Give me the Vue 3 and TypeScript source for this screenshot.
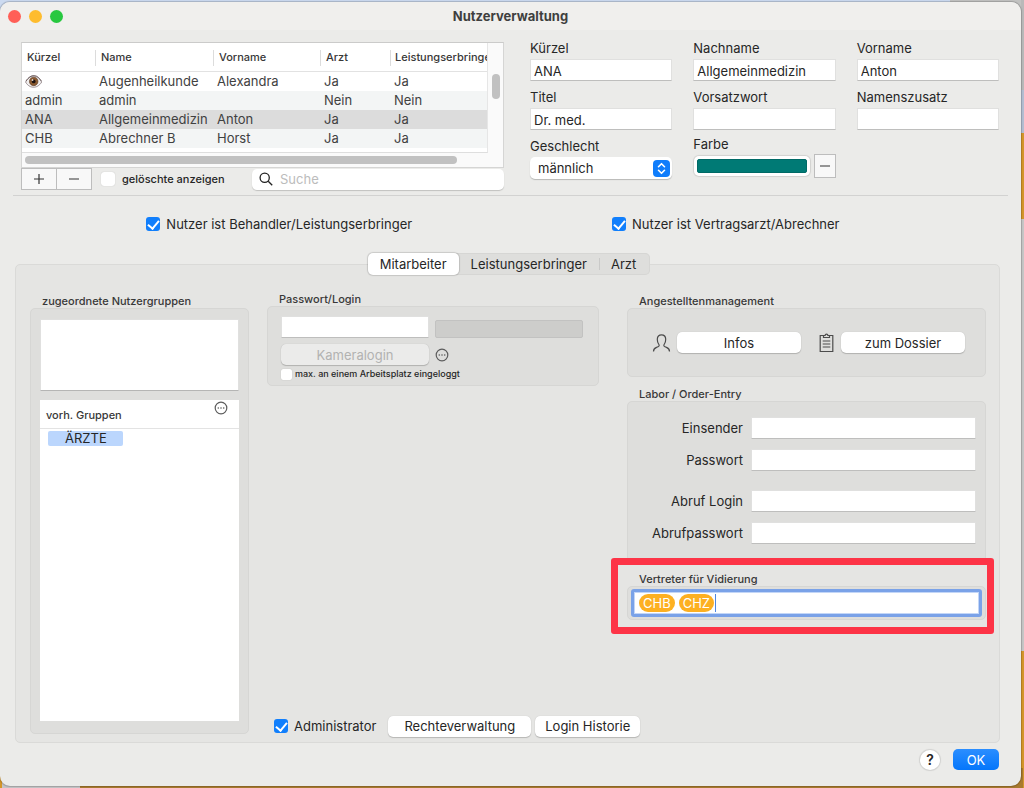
<script setup lang="ts">
import { ref } from 'vue'

interface UserRow {
  code: string
  name: string
  first: string
  doctor: string
  provider: string
}

const columns = ['Kürzel', 'Name', 'Vorname', 'Arzt', 'Leistungserbringer']
const users: UserRow[] = [
  { code: '', name: 'Augenheilkunde', first: 'Alexandra', doctor: 'Ja', provider: 'Ja' },
  { code: 'admin', name: 'admin', first: '', doctor: 'Nein', provider: 'Nein' },
  { code: 'ANA', name: 'Allgemeinmedizin', first: 'Anton', doctor: 'Ja', provider: 'Ja' },
  { code: 'CHB', name: 'Abrechner B', first: 'Horst', doctor: 'Ja', provider: 'Ja' },
]
const selected = ref(2)

const fields = ref([
  { id: 'kuerzel', label: 'Kürzel', value: 'ANA' },
  { id: 'nachname', label: 'Nachname', value: 'Allgemeinmedizin' },
  { id: 'vorname', label: 'Vorname', value: 'Anton' },
  { id: 'titel', label: 'Titel', value: 'Dr. med.' },
  { id: 'vorsatz', label: 'Vorsatzwort', value: '' },
  { id: 'zusatz', label: 'Namenszusatz', value: '' },
])
const gender = ref('männlich')
const color = ref('#007a75')

const showDeleted = ref(false)
const isProvider = ref(true)
const isContract = ref(true)
const isAdmin = ref(true)
const singleLogin = ref(false)

const tabs = ['Mitarbeiter', 'Leistungserbringer', 'Arzt']
const activeTab = ref(0)

const lab = ref([
  { id: 'einsender', label: 'Einsender', value: '' },
  { id: 'passwort', label: 'Passwort', value: '' },
  { id: 'abruflogin', label: 'Abruf Login', value: '' },
  { id: 'abrufpasswort', label: 'Abrufpasswort', value: '' },
])
const deputies = ['CHB', 'CHZ']
</script>

<template>
  <div class="desktop">
    <main class="window">
      <header class="titlebar">
        <div class="lights">
          <button class="light red" type="button" aria-label="Schließen"></button>
          <button class="light yellow" type="button" aria-label="Minimieren"></button>
          <button class="light green" type="button" aria-label="Vergrößern"></button>
        </div>
        <h1>Nutzerverwaltung</h1>
      </header>

      <section class="top">
        <div class="users">
          <div class="list">
            <div class="clip">
              <table>
                <colgroup>
                  <col class="c1" /><col class="c2" /><col class="c3" /><col class="c4" /><col class="c5" />
                </colgroup>
                <thead>
                  <tr><th v-for="c in columns" :key="c">{{ c }}</th></tr>
                </thead>
                <tbody>
                  <tr v-for="(u, i) in users" :key="u.name" :class="{ sel: i === selected }" @click="selected = i">
                    <td>
                      <svg v-if="!u.code" class="eye" viewBox="0 0 16 14" role="img" aria-label="Auge">
                        <path d="M0.5 7.5C3 3 6 2 8.2 2S13.5 3.4 15.7 7.5C13.3 11.3 10.6 12.4 8 12.4S2.700 11.200 0.500 7.500Z" fill="#f1efef" stroke="#8a7c7e" stroke-width=".8" />
                        <circle cx="8.200" cy="6.900" r="4" fill="#8a5a30" stroke="#5b3a24" stroke-width=".6" />
                        <circle cx="8.200" cy="6.900" r="1.800" fill="#1c1210" />
                        <circle cx="7.100" cy="5.600" r=".8" fill="#fff" />
                        <path d="M1 6.500C3.500 2.800 6 1.400 8.200 1.400S13 2.600 15.300 6.500" fill="none" stroke="#6b5a5b" stroke-width=".9" />
                      </svg>
                      <template v-else>{{ u.code }}</template>
                    </td>
                    <td>{{ u.name }}</td>
                    <td>{{ u.first }}</td>
                    <td>{{ u.doctor }}</td>
                    <td>{{ u.provider }}</td>
                  </tr>
                </tbody>
              </table>
            </div>
            <div class="vbar"><i></i></div>
            <div class="hbar"><i></i></div>
          </div>
          <div class="tools">
            <div class="pair">
              <button type="button" class="square" aria-label="Hinzufügen">
                <svg viewBox="0 0 12 12"><path d="M6 1v10M1 6h10" /></svg>
              </button>
              <button type="button" class="square" aria-label="Entfernen">
                <svg viewBox="0 0 12 12"><path d="M1 6h10" /></svg>
              </button>
            </div>
            <label class="check small"><input v-model="showDeleted" type="checkbox" />gelöschte anzeigen</label>
            <div class="search">
              <svg viewBox="0 0 14 14"><circle cx="5.700" cy="5.700" r="4.600" /><path d="M9.200 9.200l4 4" /></svg>
              <input type="search" placeholder="Suche" aria-label="Suche" />
            </div>
          </div>
        </div>

        <form class="form" @submit.prevent>
          <div v-for="f in fields" :key="f.id" class="field">
            <label :for="f.id">{{ f.label }}</label>
            <input :id="f.id" v-model="f.value" class="text" type="text" />
          </div>
          <div class="field">
            <label for="gender">Geschlecht</label>
            <div class="select">
              <select id="gender" v-model="gender">
                <option>männlich</option>
                <option>weiblich</option>
              </select>
              <svg viewBox="0 0 17 17"><rect width="17" height="17" rx="4" /><path d="M5.500 6.700l3-3 3 3M5.500 10.300l3 3 3-3" /></svg>
            </div>
          </div>
          <div class="field colour">
            <label for="colour">Farbe</label>
            <div class="well">
              <input id="colour" v-model="color" type="color" />
              <button type="button" class="square" aria-label="Farbe entfernen">
                <svg viewBox="0 0 12 12"><path d="M1 6h10" /></svg>
              </button>
            </div>
          </div>
        </form>
      </section>

      <hr />

      <section class="roles">
        <label class="check"><input v-model="isProvider" type="checkbox" />Nutzer ist Behandler/Leistungserbringer</label>
        <label class="check"><input v-model="isContract" type="checkbox" />Nutzer ist Vertragsarzt/Abrechner</label>
      </section>

      <nav class="tabs" role="tablist">
        <button
          v-for="(t, i) in tabs" :key="t" type="button" role="tab"
          :aria-selected="i === activeTab" :class="{ on: i === activeTab }" @click="activeTab = i"
        >{{ t }}</button>
      </nav>

      <section class="panel">
        <div class="group groups">
          <label class="cap" for="assigned">zugeordnete Nutzergruppen</label>
          <div class="box">
            <textarea id="assigned"></textarea>
            <div class="available">
              <div class="avhead">
                <span>vorh. Gruppen</span>
                <button type="button" class="more" aria-label="Mehr">
                  <svg viewBox="0 0 14 14"><circle class="ring" cx="7" cy="7" r="5.800" /><circle cx="4.300" cy="7" r=".8" /><circle cx="7" cy="7" r=".8" /><circle cx="9.700" cy="7" r=".8" /></svg>
                </button>
              </div>
              <ul><li>ÄRZTE</li></ul>
            </div>
          </div>
        </div>

        <div class="group login">
          <label class="cap" for="pw">Passwort/Login</label>
          <div class="box">
            <input id="pw" class="text" type="password" />
            <input class="strength" type="text" disabled aria-label="Passwortstärke" />
            <button type="button" class="push" disabled>Kameralogin</button>
            <button type="button" class="more" aria-label="Mehr">
              <svg viewBox="0 0 14 14"><circle class="ring" cx="7" cy="7" r="5.800" /><circle cx="4.300" cy="7" r=".8" /><circle cx="7" cy="7" r=".8" /><circle cx="9.700" cy="7" r=".8" /></svg>
            </button>
            <label class="check mini"><input v-model="singleLogin" type="checkbox" />max. an einem Arbeitsplatz eingeloggt</label>
          </div>
        </div>

        <div class="right">
          <div class="group">
            <div class="cap">Angestelltenmanagement</div>
            <div class="box staff">
              <svg class="person" viewBox="0 0 19 20"><path d="M1.500 18.500C1.500 14.800 3.500 15 6 13.800 7.600 13 7.300 12 6.600 11 5.500 9.400 5.300 7.600 5.300 6.200 5.300 3.500 7 1.800 9.500 1.800s4.200 1.700 4.200 4.400c0 1.400-.2 3.200-1.300 4.800-.7 1-1 2 .6 2.800 2.500 1.200 4.500 1 4.500 4.700" /></svg>
              <button type="button" class="push">Infos</button>
              <svg class="clipboard" viewBox="0 0 15 20"><path d="M4 2.500H1.200v16h12.600v-16H11M4.500 2.500h1.600a1.400 1.400 0 0 1 2.800 0h1.600v2h-6zM3.700 8h7.600M3.700 11h7.600M3.700 14h7.600" /></svg>
              <button type="button" class="push">zum Dossier</button>
            </div>
          </div>
          <div class="group">
            <div class="cap">Labor / Order-Entry</div>
            <div class="box lab">
              <div v-for="l in lab" :key="l.id" class="row">
                <label :for="l.id">{{ l.label }}</label>
                <input :id="l.id" v-model="l.value" class="text" type="text" />
              </div>
            </div>
          </div>
          <div class="group deputy">
            <label class="cap" for="deputy">Vertreter für Vidierung</label>
            <div class="box">
              <div class="tokens">
                <span v-for="d in deputies" :key="d" class="token">{{ d }}</span>
                <input id="deputy" type="text" />
              </div>
            </div>
            <div class="marker"></div>
          </div>
        </div>

        <div class="actions">
          <label class="check"><input v-model="isAdmin" type="checkbox" />Administrator</label>
          <button type="button" class="push rights">Rechteverwaltung</button>
          <button type="button" class="push">Login Historie</button>
        </div>
      </section>

      <footer>
        <button type="button" class="help" aria-label="Hilfe">?</button>
        <button type="button" class="ok">OK</button>
      </footer>
    </main>
  </div>
</template>

<style>
body {
  margin: 0;
}
</style>

<style scoped>
* {
  box-sizing: border-box;
}
.desktop {
  min-height: 100vh;
  padding: 2px 3px 2px 0;
  background:
    linear-gradient(90deg, #c4c4c6 78px, #a87a2e 78px) bottom / calc(100% - 3px) 20px no-repeat,
    linear-gradient(90deg, #ccdaf0 950px, #c2c2c1 950px) top left / calc(100% - 3px) 20px no-repeat,
    linear-gradient(#b9b9b9 90px, #b3bed2 90px 133px, #d4962a 133px 219px, #c6c6c6 219px 651px, #d4962a 651px);
  font-family: Inter, "Liberation Sans", sans-serif;
  font-size: 13px;
  line-height: 16px;
  color: #262626;
}
button,
input,
select,
textarea {
  margin: 0;
  padding: 0;
  border: 0;
  outline: 0;
  font: inherit;
  color: inherit;
  min-width: 0;
}
.window {
  display: flex;
  flex-direction: column;
  min-height: calc(100vh - 4px);
  border-radius: 10px;
  background: #ebebe9;
  box-shadow: 0 0 1px 1px #00000030;
  overflow: hidden;
}
.titlebar {
  display: grid;
  grid-template-columns: 1fr auto 1fr;
  align-items: center;
  height: 28px;
  background: #f0efed;
}
.titlebar h1 {
  margin: 0;
  font-size: 13px;
  font-weight: 700;
  color: #3f3f3f;
}
.lights {
  display: flex;
  gap: 8px;
  padding-left: 8px;
}
.light {
  width: 13px;
  height: 13px;
  border-radius: 50%;
}
.red { background: #ff5f57; }
.yellow { background: #febc2e; }
.green { background: #28c840; }

.top {
  display: flex;
  gap: 26px;
  padding: 10px 22px 0 21px;
}
.users {
  width: 483px;
  padding-top: 2px;
}
.list {
  display: grid;
  grid-template-columns: 1fr 15px;
  grid-template-rows: auto 14px;
  border: 1px solid #d5d5d4;
  border-top-color: #cbcbca;
  background: #fafafa;
}
.clip {
  overflow: hidden;
  height: 110px;
  background: #fff;
  border-bottom: 1px solid #dedede;
  border-right: 1px solid #e6e6e6;
}
table {
  table-layout: fixed;
  width: 100%;
  border-collapse: collapse;
  color: #414141;
}
.c1 { width: 73px; }
.c2 { width: 118px; }
.c3 { width: 107px; }
.c4 { width: 70px; }
th {
  height: 28px;
  padding: 0 0 0 6px;
  overflow: hidden;
  border-bottom: 1px solid #e2e2e2;
  background: linear-gradient(#dcdcdc, #dcdcdc) left 7px / 1px 16px no-repeat;
  font-size: 11px;
  font-weight: 500;
  text-align: left;
  white-space: nowrap;
  color: #383838;
}
th:first-child {
  padding-left: 5px;
  background: none;
}
th:last-child {
  padding-left: 5px;
}
td {
  height: 19px;
  padding: 0 0 0 4px;
  line-height: 19px;
  white-space: nowrap;
}
td:first-child {
  padding-left: 3px;
}
tbody tr:nth-child(even) {
  background: #f3f5f5;
}
tbody tr.sel {
  background: #dcdcdc;
}
.eye {
  display: block;
  width: 17px;
  height: 15px;
}
.vbar {
  padding: 31px 0 0 4px;
}
.vbar i {
  display: block;
  width: 8px;
  height: 25px;
  border-radius: 4px;
  background: #c1c1c1;
}
.hbar {
  grid-column: 1 / -1;
  padding: 3px 46px 0 3px;
}
.hbar i {
  display: block;
  height: 8px;
  border-radius: 4px;
  background: #c1c1c1;
}
.tools {
  display: flex;
  align-items: center;
  height: 22px;
}
.pair {
  display: flex;
}
.square {
  display: grid;
  place-items: center;
  width: 36px;
  height: 22px;
  border: 1px solid #bdbdbd;
  background: #f8f8f8;
}
.pair .square + .square {
  margin-left: -1px;
}
.square svg {
  width: 12px;
  height: 12px;
  fill: none;
  stroke: #333;
  stroke-width: 1.2;
}
.check {
  display: inline-flex;
  align-items: center;
  gap: 6px;
  white-space: nowrap;
}
.check input {
  appearance: none;
  display: grid;
  place-items: center;
  width: 14px;
  height: 14px;
  border-radius: 3px;
  background: #fff;
  box-shadow: 0 0 1px #00000040;
}
.check input:checked {
  background: #117ffc;
  box-shadow: none;
}
.check input:checked::before {
  content: "";
  width: 5px;
  height: 9px;
  margin-top: -2px;
  border: solid #fff;
  border-width: 0 2px 2px 0;
  transform: rotate(40deg);
}
.small {
  margin-left: 9px;
  font-size: 11px;
  font-weight: 500;
  gap: 7px;
}
.search {
  display: flex;
  align-items: center;
  gap: 7px;
  width: 252px;
  height: 21px;
  margin-left: auto;
  padding: 0 7px;
  border-radius: 5px;
  background: #fff;
  box-shadow: 0 1px 1px #0000002e;
}
.search svg {
  width: 14px;
  height: 14px;
  fill: none;
  stroke: #222;
  stroke-width: 1.3;
}
.search input {
  flex: 1;
  background: none;
}
.search input::placeholder {
  color: #bcbcbc;
}
.form {
  flex: 1;
  display: grid;
  grid-template-columns: repeat(3, minmax(0, 1fr));
  gap: 8px 21px;
  align-content: start;
}
.field {
  display: flex;
  flex-direction: column;
  gap: 3px;
}
.text {
  width: 100%;
  height: 22px;
  padding: 1px 3px 0;
  border: 1px solid #e0e0df;
  border-bottom-color: #bebebd;
  background: #fff;
}
.select {
  position: relative;
}
.select select {
  appearance: none;
  display: block;
  width: 100%;
  height: 22px;
  padding-left: 8px;
  border-radius: 5px;
  background: #fff;
  box-shadow: 0 1px 1px #00000038;
}
.select svg {
  position: absolute;
  top: 3px;
  right: 2px;
  width: 17px;
  height: 17px;
  pointer-events: none;
  fill: #0f7dfb;
}
.select path {
  fill: none;
  stroke: #fff;
  stroke-width: 1.6;
  stroke-linecap: round;
  stroke-linejoin: round;
}
.colour label {
  line-height: 13px;
}
.well {
  display: flex;
  align-items: center;
  gap: 4px;
  padding-left: 1px;
}
.well input {
  appearance: none;
  flex: 1;
  height: 20px;
  padding: 3px;
  border-radius: 5px;
  background: #fff;
  box-shadow: 0 0 1px 1px #0000001c;
}
.well input::-webkit-color-swatch-wrapper {
  padding: 0;
}
.well input::-webkit-color-swatch {
  border: 1px solid #006a66;
  border-radius: 2px;
}
.well .square {
  width: 22px;
  height: 24px;
}
hr {
  width: calc(100% - 26px);
  height: 1px;
  margin: 5px 13px 0;
  border: 0;
  background: #d2d2d1;
}
.roles {
  display: grid;
  grid-template-columns: 1fr 1fr;
  justify-items: center;
  margin-top: 20px;
  padding: 0 72px 0 56px;
}
.tabs {
  display: flex;
  align-self: center;
  position: relative;
  z-index: 1;
  margin: 21px 3px 0 0;
  border-radius: 5px;
  background: #dededc;
  box-shadow: inset 0 0 0 1px #d6d6d4;
}
.tabs button {
  height: 22px;
  padding: 0 12px;
  border-radius: 5px;
  background: none;
}
.tabs button.on {
  background: #fff;
  box-shadow: 0 0 1px 1px #00000024;
}
.tabs button:last-child {
  padding-right: 14px;
  border-radius: 0;
  background: linear-gradient(#c9c9c8, #c9c9c8) left center / 1px 12px no-repeat;
}
.panel {
  flex: 1;
  display: grid;
  grid-template-columns: 219px minmax(0, 350fr) minmax(0, 387fr);
  grid-template-rows: 1fr auto;
  margin: -11px 21px 0 15px;
  padding: 29px 13px 5px 14px;
  border: 1px solid #dadad8;
  border-radius: 5px;
  background: #e5e5e3;
}
.cap {
  display: block;
  padding-left: 12px;
  font-size: 11px;
  font-weight: 500;
  line-height: 14px;
  color: #383838;
}
.box {
  border: 1px solid #d6d6d4;
  border-radius: 5px;
  background: #dededc;
}
.groups {
  grid-row: 1 / 3;
  display: flex;
  flex-direction: column;
  margin-bottom: 3px;
}
.groups .box {
  flex: 1;
  display: flex;
  flex-direction: column;
  gap: 9px;
  padding: 10px 9px 12px 9px;
}
textarea {
  display: block;
  height: 72px;
  border: 1px solid #e0e0df;
  border-bottom-color: #b5b5b4;
  background: #fff;
  resize: none;
}
.available {
  flex: 1;
  background: #fff;
}
.avhead {
  display: flex;
  justify-content: space-between;
  height: 29px;
  padding: 1px 11px 0 6px;
  border-bottom: 1px solid #e3e3e3;
  font-size: 11px;
  font-weight: 500;
  line-height: 28px;
  color: #383838;
}
.more {
  display: block;
  width: 14px;
  height: 14px;
  background: none;
}
.more svg {
  display: block;
  fill: #5c5c5c;
}
.more .ring {
  fill: none;
  stroke: #5c5c5c;
  stroke-width: 1.2;
}
ul {
  margin: 2px 0 0 8px;
  padding: 0;
  list-style: none;
}
li {
  width: 75px;
  padding-left: 17px;
  border-radius: 2px;
  line-height: 15px;
  background: #bbd6fd;
}
.login {
  margin: -2px 0 0 18px;
}
.login .box {
  display: grid;
  grid-template-columns: 1fr 1fr;
  gap: 6px;
  align-items: center;
  padding: 9px 15px 5px 13px;
}
.strength {
  align-self: end;
  height: 18px;
  border: 1px solid #c2c2c1;
  border-radius: 2px;
  background: #cdcdcb;
}
.push {
  height: 21px;
  padding: 0 10px;
  border-radius: 5px;
  background: #fff;
  box-shadow: 0 1px 1px #00000030, 0 0 1px #00000030;
}
.push:disabled {
  color: #b2b2b1;
  background: #ebebea;
}
.mini {
  grid-column: 1 / -1;
  gap: 3px;
  margin-top: -3px;
  font-size: 9px;
  font-weight: 500;
  line-height: 12px;
}
.mini input {
  width: 11px;
  height: 11px;
  border-radius: 2px;
}
.right {
  display: flex;
  flex-direction: column;
  gap: 10px;
  margin-left: 28px;
}
.staff {
  display: flex;
  align-items: center;
  height: 69px;
  padding: 0 20px 0 24px;
}
.staff .push {
  flex: 1;
}
.staff svg {
  flex: none;
  height: 20px;
  fill: none;
  stroke: #4c4c4c;
  stroke-width: 1.2;
}
.person {
  width: 19px;
  margin-right: 6px;
}
.clipboard {
  width: 15px;
  margin: 0 7px 0 18px;
}
.lab {
  display: flex;
  flex-direction: column;
  gap: 10px;
  padding: 15px 9px 17px;
}
.row {
  display: grid;
  grid-template-columns: 106px 1fr;
  gap: 8px;
  align-items: center;
  text-align: right;
}
.row:nth-child(3) {
  margin-top: 9px;
}
.deputy {
  position: relative;
}
.deputy .box {
  padding: 2px 3px;
}
.tokens {
  display: flex;
  align-items: center;
  gap: 4px;
  height: 28px;
  padding: 0 5px;
  border: 3px solid #7aa2e8;
  border-radius: 3px;
  background: #fff;
  box-shadow: inset 0 0 0 1px #c3d6f7;
}
.token {
  padding: 0 4px;
  border-radius: 9px;
  line-height: 18px;
  background: #fdb022;
  color: #fff;
}
.tokens input {
  flex: 1;
  height: 18px;
  margin-left: -3px;
  border-left: 1px solid #4f86e0;
  background: none;
}
.marker {
  position: absolute;
  inset: -14px -8px -14px -16px;
  border: 7px solid #fd3447;
  border-radius: 3px;
  pointer-events: none;
}
.actions {
  grid-column: 2 / 4;
  display: flex;
  align-items: center;
  gap: 4px;
  height: 22px;
  margin-left: 25px;
}
.actions .check {
  margin-right: 8px;
}
.rights {
  padding: 0 16px;
}
footer {
  display: flex;
  justify-content: flex-end;
  align-items: center;
  gap: 13px;
  padding: 6px 22px 16px;
}
.help {
  width: 20px;
  height: 20px;
  border-radius: 50%;
  background: #fff;
  box-shadow: 0 0 1px 1px #0000001c;
  font-size: 14px;
  font-weight: 600;
}
.ok {
  width: 46px;
  height: 21px;
  border-radius: 5px;
  background: linear-gradient(#2b8eff, #0476fb);
  color: #fff;
}
</style>
